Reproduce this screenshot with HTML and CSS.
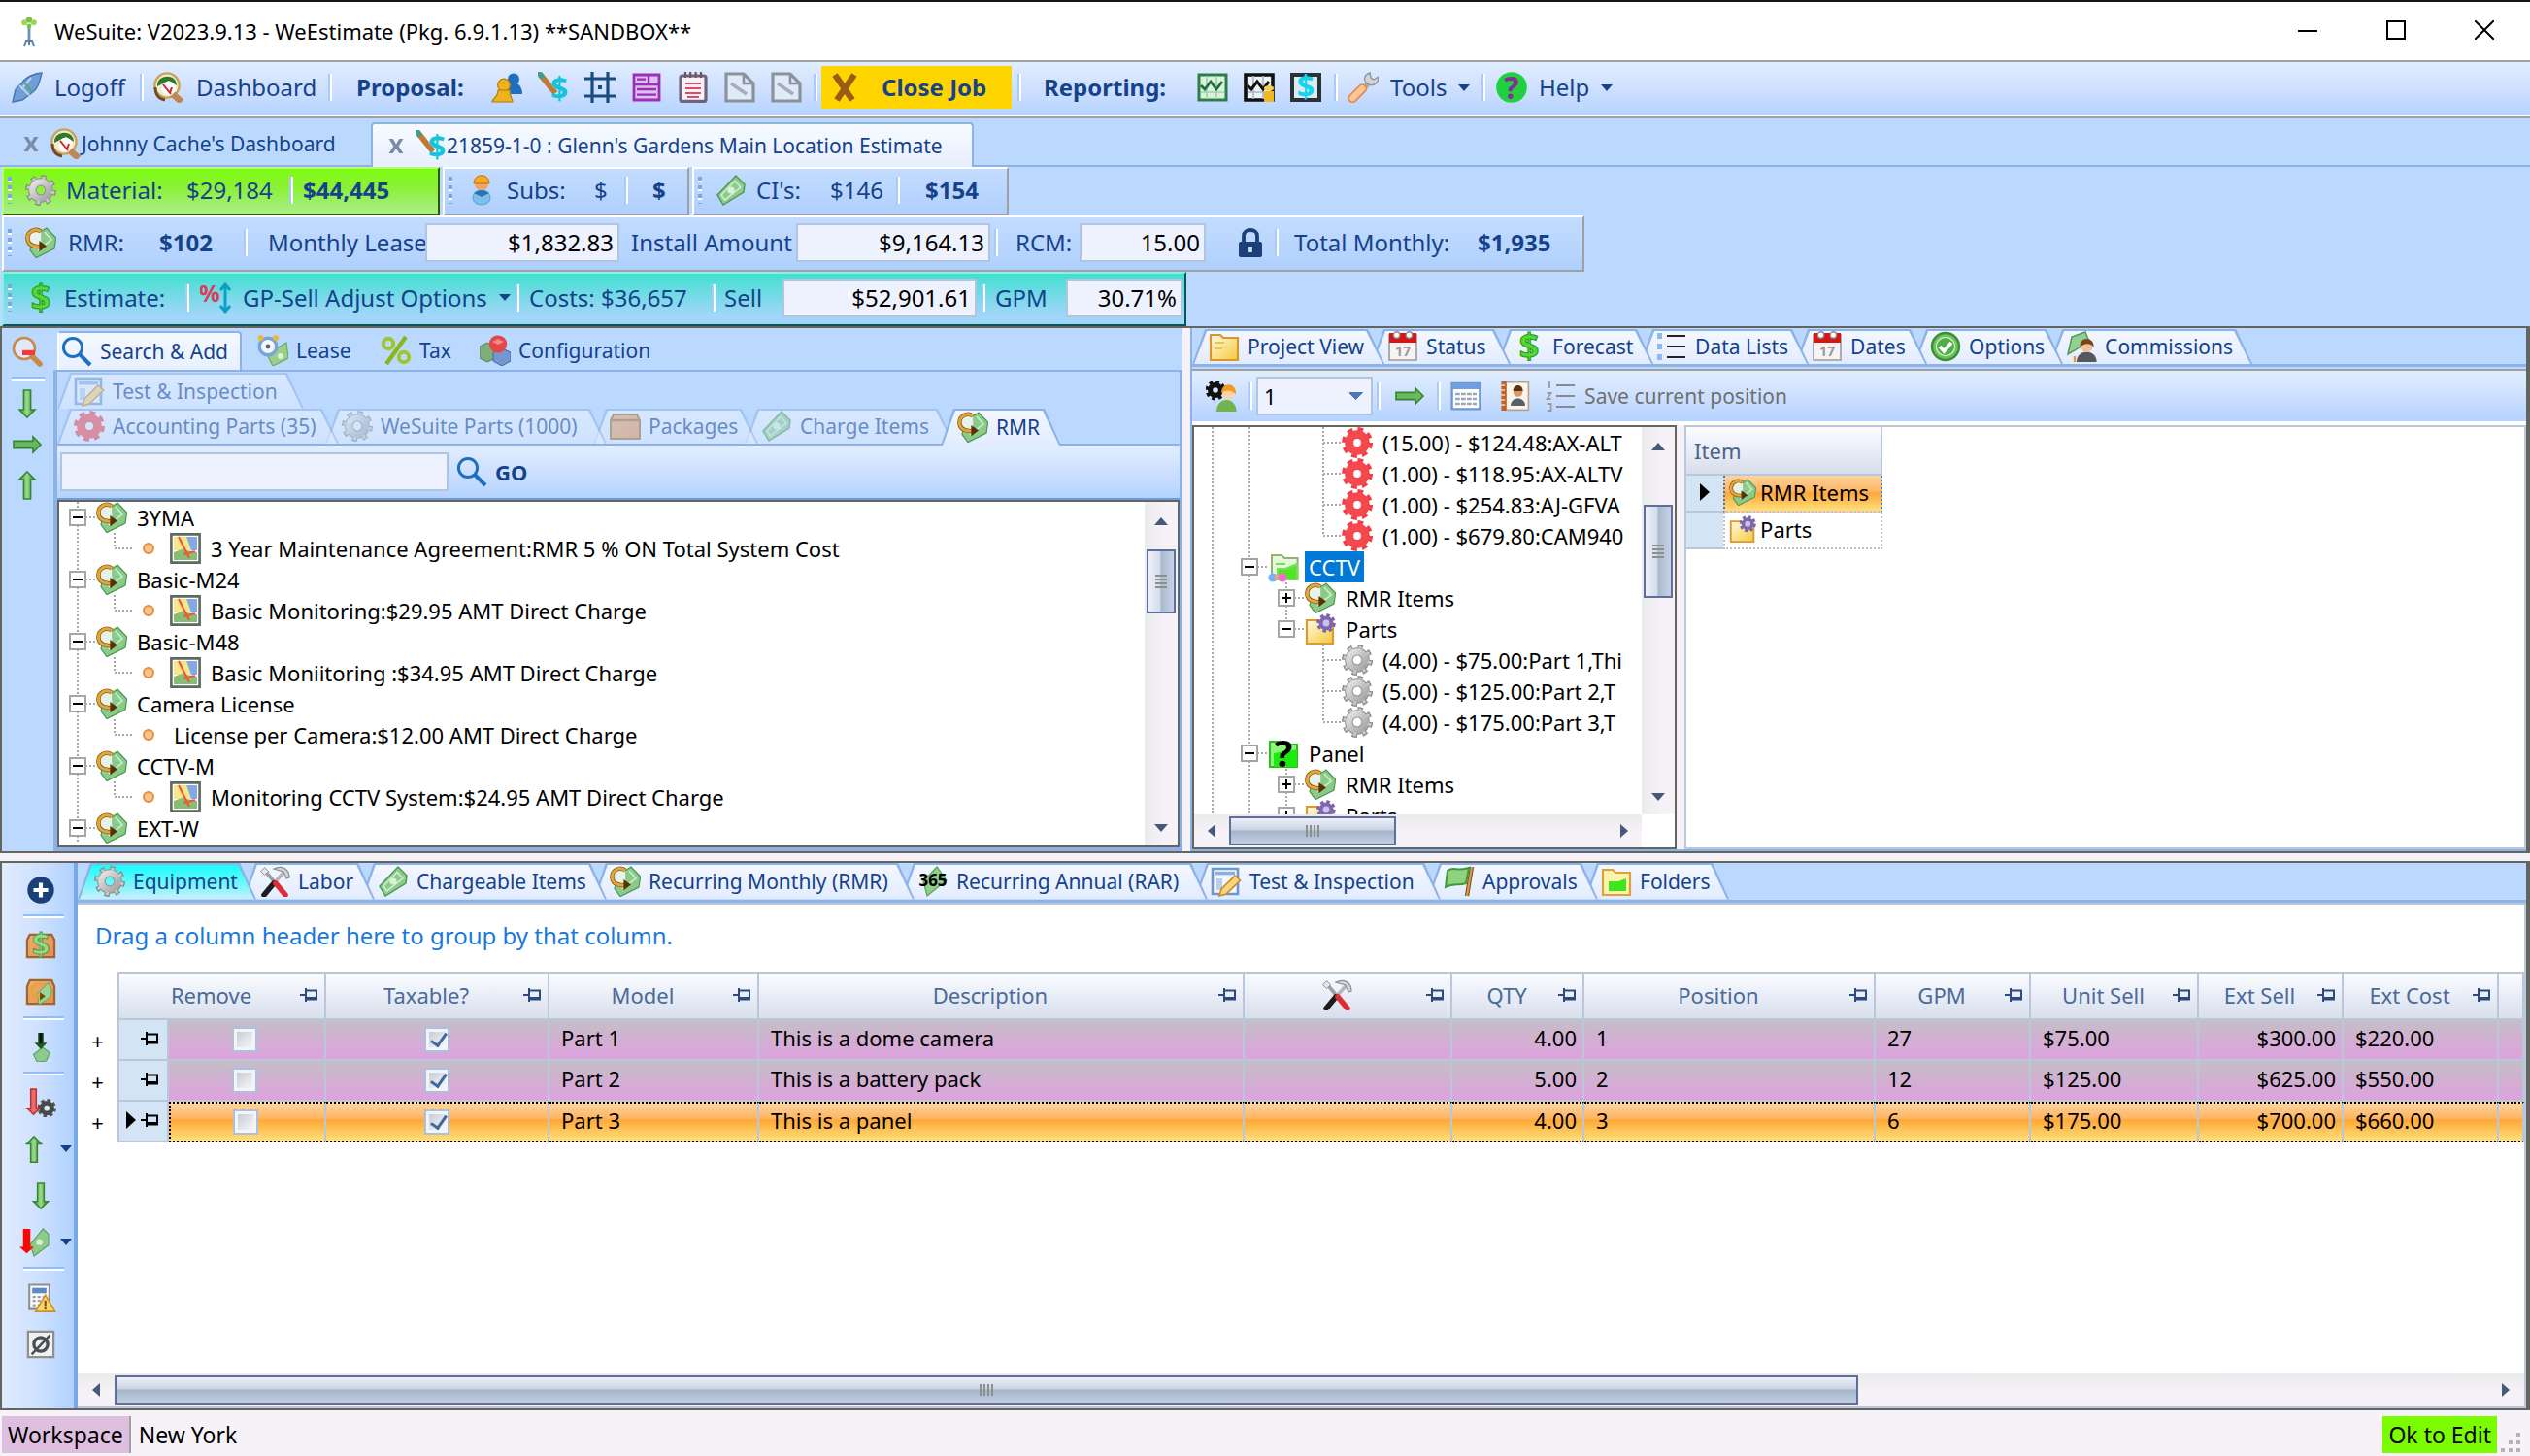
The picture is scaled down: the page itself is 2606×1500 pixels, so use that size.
FILE: index.html
```
<!DOCTYPE html>
<html lang="en">
<head>
<meta charset="utf-8">
<title>WeSuite: V2023.9.13 - WeEstimate</title>
<link rel="stylesheet" href="styles.css">
</head>
<body>

<svg class="paints" aria-hidden="true">
  <linearGradient id="gGreen" x1="0" x2="1"><stop offset="0" stop-color="#3f9a3a"/><stop offset=".5" stop-color="#9bdc8e"/><stop offset="1" stop-color="#2f7a2c"/></linearGradient>
  <linearGradient id="gGray" x1="0" y1="0" x2="1" y2="1"><stop offset="0" stop-color="#e6e6e6"/><stop offset="1" stop-color="#a2a2a2"/></linearGradient>
  <linearGradient id="gFolder" x1="0" y1="0" x2="1" y2="1"><stop offset="0" stop-color="#fffbe0"/><stop offset="1" stop-color="#f6c83a"/></linearGradient>
  <linearGradient id="gBox" x1="0" y1="0" x2="1" y2="1"><stop offset="0" stop-color="#e8b070"/><stop offset="1" stop-color="#f08a50"/></linearGradient>
</svg>

<!-- icon set -->
<svg class="defs" aria-hidden="true">
  <symbol id="logo" viewBox="0 0 16 16"><path d="M8 5v8" stroke="#6f8fae" stroke-width="1.4"/><path d="M5.5 15.5l1-2.5h3l1 2.5M8 13v2" fill="none" stroke="#5d80a6"/><circle cx="8" cy="2.2" r="1.6" fill="#7cc242"/><circle cx="5.6" cy="3.6" r="1.5" fill="#9bd45f"/><circle cx="10.4" cy="3.6" r="1.5" fill="#9bd45f"/><circle cx="8" cy="5.5" r="1.2" fill="#7cc242"/></symbol>
  <symbol id="logoff" viewBox="0 0 16 16"><path d="M15.500.5c-3 0-8 2-10 5L2 9 .5 15.500l5-1 6-4.500c3-3 3-6 4-9.500z" fill="#6f9fd8" stroke="#4673b4" stroke-width=".7"/><path d="M4 7l5 5M10 3L5 9" stroke="#b4d3f3"/><path d="M6.500 5.500l4 5" stroke="#5aa85a" stroke-width="1"/></symbol>
  <symbol id="dash" viewBox="0 0 16 16"><circle cx="7" cy="7" r="6.300" fill="#f3e9cc" stroke="#c8a45a" stroke-width="1.200"/><path d="M2 7.500C1.500 1 12 .5 12 7L8 4.500z" fill="#2e7a2c"/><circle cx="7.800" cy="8.500" r="3.600" fill="#fff"/><path d="M5 6.500l4 5M9.500 8l-1 3" stroke="#d3222c" stroke-width="1"/><path d="M10 11.500l4.500 4" stroke="#c08850" stroke-width="3.400"/><path d="M1 8c0 4 2 6 5 6.500" stroke="#6f4a24" stroke-width="1.400" fill="none"/></symbol>
  <symbol id="people" viewBox="0 0 16 16"><circle cx="11.500" cy="3.800" r="3" fill="#1f6fc0"/><path d="M7 11.500c0-8 9-8 9 0z" fill="#1f6fc0"/><circle cx="6.500" cy="6.800" r="3.200" fill="#f0b21a" stroke="#b47a10" stroke-width=".6"/><path d="M.5 15.500c0-2 3-2 3-6h6c0 4 1.500 4 1.500 6z" fill="#f0b21a" stroke="#b47a10" stroke-width=".6"/></symbol>
  <symbol id="pencil" viewBox="0 0 16 16"><path d="M1 1l8 10" stroke="#c07a35" stroke-width="3"/><path d="M0 0l2.500 3" stroke="#3aa08c" stroke-width="2.600"/><text x="6.500" y="14.500" class="ic-t" font-size="16" fill="#14c4da">$</text></symbol>
  <symbol id="hash" viewBox="0 0 16 16"><path d="M4 0v16M12 0v16M0 3.500h16M0 12.500h16" stroke="#1b4b7c" stroke-width="1.600"/><path d="M7 7h2v2H7z" fill="#1b4b7c"/></symbol>
  <symbol id="form" viewBox="0 0 16 16"><path d="M1.500 1.500h13v13h-13z" fill="#dcc0ee" stroke="#9b2fb8" stroke-width="1.400"/><path d="M9 1.500v5M1.500 6.500h13M3 3.800h4.500M3 9h10M3 11.800h10" stroke="#9b2fb8" stroke-width="1.200"/></symbol>
  <symbol id="notepad" viewBox="0 0 16 16"><rect x="1.500" y="2" width="13" height="13.200" rx="1" fill="#f6f2f6" stroke="#6f6480" stroke-width="1.600"/><path d="M4 0v3M6.600 0v3M9.300 0v3M12 0v3" stroke="#6f5060" stroke-width="1.100"/><path d="M4 6h8M4 8.500h8M4 11h8M5 13h6" stroke="#dd4a6a" stroke-width="1"/></symbol>
  <symbol id="docedit" viewBox="0 0 16 16"><path d="M1 1h9l5 5v9H1z" fill="#dfeafa" stroke="#8d9299" stroke-width="1.600"/><path d="M10 1v5h5" fill="none" stroke="#8d9299" stroke-width="1.300"/><path d="M3.500 6l8 5.500" stroke="#a7aeb8" stroke-width="1.800"/></symbol>
  <symbol id="bigx" viewBox="0 0 16 16"><path d="M3 1.500l9 13M13 1.500l-9 13" stroke="#9a5c14" stroke-width="3.200"/></symbol>
  <symbol id="chartg" viewBox="0 0 16 16"><path d="M1 1.500h14v13H1z" fill="#d9f2dc" stroke="#2f7d46" stroke-width="1.500"/><path d="M5 2v12M10 2v12M2 10.500h12" stroke="#9fcfae" stroke-width=".8"/><path d="M2 7l2 2 3-4 3 4 3-4" fill="none" stroke="#1f6d3a" stroke-width="1.400"/></symbol>
  <symbol id="chartb" viewBox="0 0 16 16"><path d="M1 1.500h14v13H1z" fill="#eef2f8" stroke="#111" stroke-width="1.800"/><path d="M5 2v12M10 2v12M2 10.500h12" stroke="#a8b4c8" stroke-width=".8"/><path d="M2 7l2 2 3-4 3 4 3-4" fill="none" stroke="#111" stroke-width="1.500"/><ellipse cx="13" cy="8.500" rx="2.500" ry="1.400" fill="#f7d04a"/><path d="M10.500 10h5v5.500h-5z" fill="#efb825"/></symbol>
  <symbol id="chartd" viewBox="0 0 16 16"><path d="M1 1.500h14v13H1z" fill="#dfe9f2" stroke="#2a3238" stroke-width="2"/><text x="8" y="13.600" text-anchor="middle" class="ic-t" font-size="16" fill="#12d5ee">$</text></symbol>
  <symbol id="wrench" viewBox="0 0 16 16"><path d="M8.500 8.500l3-3.500" stroke="#a9acb4" stroke-width="2.800"/><path d="M11.500.5c-3 1-3.500 4-1.500 5.500s6 1 6-3.500l-2.500 1.500-1.500-1z" fill="#d2d4d8" stroke="#8f929a" stroke-width=".7"/><path d="M2.600 13.600l5-5" stroke="#e58a50" stroke-width="5" stroke-linecap="round"/><path d="M2.600 13.600l5-5" stroke="#fbc59a" stroke-width="3.200" stroke-linecap="round"/></symbol>
  <symbol id="help" viewBox="0 0 16 16"><circle cx="8" cy="8" r="7.900" fill="#1fd03f"/><text x="8" y="13.800" text-anchor="middle" class="ic-t" font-size="16" fill="#8a2a9c">?</text></symbol>
  <symbol id="gear" viewBox="0 0 16 16"><circle cx="8" cy="8" r="6.800" fill="none" stroke="#8b8b8b" stroke-width="2.400" stroke-dasharray="2.600 2.741"/><circle cx="8" cy="8" r="4.300" fill="none" stroke="#8f8f8f" stroke-width="4.200"/><circle cx="8" cy="8" r="4.300" fill="none" stroke="url(#gGray)" stroke-width="3.200"/><circle cx="8" cy="8" r="6.400" fill="none" stroke="#c8c8c8" stroke-width="1.800" stroke-dasharray="1.500 3.527" stroke-dashoffset="-.5"/></symbol>
  <symbol id="gearred" viewBox="0 0 16 16"><circle cx="8" cy="8" r="6.700" fill="none" stroke="#ee4046" stroke-width="2.600" stroke-dasharray="2.800 2.462"/><circle cx="8" cy="8" r="4.200" fill="none" stroke="#f2484e" stroke-width="4.400"/></symbol>
  <symbol id="sub" viewBox="0 0 16 16"><circle cx="8" cy="4.800" r="3.500" fill="#e9a668"/><path d="M4 4.500c0-5.500 8-5.500 8 0z" fill="#f7a823" stroke="#c06f14" stroke-width=".5"/><path d="M3.500 12c0-5 9-5 9 0 0 4.500-9 4.500-9 0z" fill="#7cc0ee" stroke="#5a9fd4" stroke-width=".5"/><path d="M4 9.500c2-2 6-2 8 0l-4 2z" fill="#2f72b8"/></symbol>
  <symbol id="money" viewBox="0 0 16 16"><path d="M1 10.500L10.500.5 15 5l-.5 4L4 15.500z" fill="#8ccb8c" stroke="#4f9650" stroke-width=".7"/><path d="M3 10.500L10 3.200 13 6.500 4.800 13z" fill="none" stroke="#cdeccb" stroke-width=".8"/><circle cx="8" cy="8" r="1.800" fill="#d9f2d6"/></symbol>
  <symbol id="rmr" viewBox="0 0 16 16"><path d="M4 5L11 .5l4.800 5L15 11l-9.500 4.800-3-4z" fill="#8acb8a" stroke="#4f9650" stroke-width=".6"/><path d="M10 2.500l3.500 4-7 5.500" fill="none" stroke="#c8eac6" stroke-width=".9"/><path d="M8 2.300C5 0 1 2.500 1.200 6c.2 3.500 4 4.300 7 4" fill="#e8f2ea" stroke="#8a5a12" stroke-width="2.200"/><path d="M8 2.300C5 0 1 2.500 1.200 6c.2 3.500 4 4.300 7 4" fill="none" stroke="#e2a63a" stroke-width="1.400"/><path d="M7.200 7l3.800 2.800L7.200 12.600z" fill="#5a3208"/></symbol>
  <symbol id="lock" viewBox="0 0 16 16"><path d="M4.500 8V4.500c0-4 7-4 7 0V8" fill="none" stroke="#1b3f78" stroke-width="1.900"/><rect x="2" y="7.500" width="12" height="8" rx="1" fill="#1b3f78"/><path d="M8 10v3" stroke="#cfe0fa" stroke-width="1.800"/></symbol>
  <symbol id="dollar" viewBox="0 0 16 16"><text x="8" y="14.200" text-anchor="middle" class="ic-t" font-size="18" fill="#55d83a" stroke="#2a9f1d" stroke-width=".6">$</text></symbol>
  <symbol id="gp" viewBox="0 0 16 16"><text x="-.5" y="10" class="ic-t" font-size="12" fill="#dd3b5a">%</text><path d="M13 1.500v13M10.500 4L13 1l2.500 3M10.500 12l2.500 3 2.500-3" fill="none" stroke="#0f9fc4" stroke-width="1.500"/></symbol>
  <symbol id="mag" viewBox="0 0 16 16"><circle cx="6" cy="6" r="4.800" fill="none" stroke="#1d6fc0" stroke-width="1.500"/><path d="M9.500 9.500L15 15" stroke="#1d6fc0" stroke-width="2"/></symbol>
  <symbol id="magminus" viewBox="0 0 16 16"><circle cx="6.500" cy="6.500" r="5.500" fill="#dfe9f8" stroke="#c98a4a" stroke-width="1.300"/><path d="M10.500 10.500l4 4" stroke="#c88a48" stroke-width="2.800" stroke-linecap="round"/><path d="M5.500 8.700h6.500" stroke="#f43a3a" stroke-width="2.600"/></symbol>
  <symbol id="up" viewBox="0 0 16 16"><path d="M8 1l4 4H9.800v10H6.200V5H4z" fill="url(#gGreen)" stroke="#37862f" stroke-width=".8"/></symbol>
  <symbol id="down" viewBox="0 0 16 16"><path d="M8 15l4-4H9.800V1H6.200v10H4z" fill="url(#gGreen)" stroke="#37862f" stroke-width=".8"/></symbol>
  <symbol id="right" viewBox="0 0 16 16"><path d="M15 8l-4-4v2.200H1v3.600h10V12z" fill="#6bb862" stroke="#37862f" stroke-width=".8"/></symbol>
  <symbol id="clock" viewBox="0 0 16 16"><path d="M5 10l10-6 1 8-8 4z" fill="#9ad08c" stroke="#6aab5c" stroke-width=".6"/><circle cx="5.500" cy="6" r="4.400" fill="#f3f8fd" stroke="#78a4dc" stroke-width="1.700"/><circle cx="5.500" cy="6" r="1.200" fill="#667"/><circle cx="1.800" cy="1.500" r="1.500" fill="#edb93a"/><circle cx="9.500" cy="1.500" r="1.500" fill="#edb93a"/><circle cx="12" cy="11" r="1.500" fill="#dcf3d0"/></symbol>
  <symbol id="percent" viewBox="0 0 16 16"><path d="M13 1L3 15" stroke="#8bb51c" stroke-width="2.200"/><circle cx="4" cy="4.500" r="2.600" fill="none" stroke="#9cc62b" stroke-width="2"/><circle cx="12" cy="11.500" r="2.600" fill="none" stroke="#9cc62b" stroke-width="2"/></symbol>
  <symbol id="blocks" viewBox="0 0 16 16"><path d="M0 6l4-2 4 2v6l-4 2-4-2z" fill="#7fae7b" stroke="#4d8450" stroke-width=".5"/><path d="M7 9l4.500-2L16 9v4.500L11.500 16 7 13.500z" fill="#7497cf" stroke="#44669c" stroke-width=".5"/><circle cx="9.500" cy="4.800" r="4.600" fill="#e24848"/><path d="M6.500 3.500l3-1.500 3 1.500-3 1.500z" fill="#f58a8a"/></symbol>
  <symbol id="note" viewBox="0 0 16 16"><path d="M1 1.500h13v13H1z" fill="#f4f8fd" stroke="#6d97cf" stroke-width="1.300"/><path d="M2.500 3.800h10" stroke="#89b0e0" stroke-width="1.800"/><path d="M3 6.500h3v6H3z" fill="#b5d0f0"/><path d="M4.500 15.500l1-3.500 7-7 2.800 2.500-7.300 7z" fill="#fbd57a" stroke="#c58a34" stroke-width=".8"/></symbol>
  <symbol id="box" viewBox="0 0 16 16"><path d="M2 2h12l1.500 3v9.500H.5V5z" fill="url(#gBox)" stroke="#a0662a" stroke-width="1"/><path d="M.5 5h15" stroke="#a0662a" stroke-width="1.200"/></symbol>
  <symbol id="map" viewBox="0 0 16 16"><path d="M.7.7h14.600v14.600H.7z" fill="#fff" stroke="#5d6a5f" stroke-width="1.300"/><path d="M2 2h6.500l2.500 7H2z" fill="#f6e88a"/><path d="M8.500 2H14v7h-3z" fill="#82a8e6"/><path d="M2 10l4-1.500 8 1.500v4H2z" fill="#86bf72"/><path d="M4.500 2l5.500 11M7 11l6-1.500" stroke="#f0563c" stroke-width="1.100"/></symbol>
  <symbol id="folder" viewBox="0 0 16 16"><path d="M1 2h5l1.500 1.500H15v11.500H1z" fill="url(#gFolder)" stroke="#d9972e" stroke-width="1.100"/><path d="M3 6h5M3 9h4" stroke="#e8c264" stroke-width=".9"/></symbol>
  <symbol id="calendar" viewBox="0 0 16 16"><path d="M1 2h14v13H1z" fill="#f5f3f3" stroke="#9b9a9a" stroke-width=".8"/><path d="M1 1h14v5H1z" fill="#d81414"/><circle cx="4.800" cy="2" r="1.600" fill="#fff" stroke="#8c8c8c" stroke-width=".7"/><circle cx="11.200" cy="2" r="1.600" fill="#fff" stroke="#8c8c8c" stroke-width=".7"/><text x="8" y="13" text-anchor="middle" class="ic-t" font-size="7" fill="#9a9a9a">17</text></symbol>
  <symbol id="list" viewBox="0 0 16 16"><path d="M5.500 2.500H15M5.500 8H15M5.500 13.500H15" stroke="#222" stroke-width="1.100"/><path d="M.5 1h2.500v3H.5zM.5 6.500h2.500v3H.5zM.5 12h2.500v3H.5z" fill="#8db8f0"/></symbol>
  <symbol id="numlist" viewBox="0 0 16 16"><path d="M5.500 2.500H15M5.500 8H15M5.500 13.500H15" stroke="#8a8a8a" stroke-width="1.100"/><path d="M2 .5v3.500M.8 6.500h2l-2 3h2M.8 12h2v3.500h-2" fill="none" stroke="#9a9a9a" stroke-width=".9"/></symbol>
  <symbol id="check" viewBox="0 0 16 16"><circle cx="8" cy="8" r="7" fill="#6cc458" stroke="#3a8f38" stroke-width="1.200"/><circle cx="8" cy="8" r="4.800" fill="#4fae47" stroke="#d8f0d2" stroke-width=".6"/><path d="M5 8l2.200 2.400L11 6" fill="none" stroke="#fff" stroke-width="1.900"/></symbol>
  <symbol id="commission" viewBox="0 0 16 16"><path d="M1 12L3 3l7-2.500 2 5z" fill="#92cf93" stroke="#4f9650" stroke-width=".7"/><path d="M5.500 16c0-7 10.300-7 10.300 0z" fill="#55585c"/><circle cx="10.800" cy="8" r="3" fill="#efc39a"/><path d="M7.300 8.500c-.8-6 7.500-6 7 0-1-2.500-5.500-2.500-7 0z" fill="#7a431b"/><path d="M4.500 13v3" stroke="#e8973a" stroke-width="1.200"/></symbol>
  <symbol id="gearuser" viewBox="0 0 16 16"><circle cx="5" cy="5" r="4.200" fill="none" stroke="#111" stroke-width="2" stroke-dasharray="1.800 1.499"/><circle cx="5" cy="5" r="2.700" fill="none" stroke="#111" stroke-width="2.600"/><path d="M5.500 16c0-8 10.300-8 10.300 0z" fill="#6fb54f"/><circle cx="11.500" cy="6.800" r="3" fill="#fbd4a4"/><path d="M8 6.500c0-6 8-6 7.500 1-1.500-2.500-5-3-7.500-1z" fill="#f19c1c"/></symbol>
  <symbol id="table" viewBox="0 0 16 16"><path d="M.8 1.500h14.400v13.200H.8z" fill="#fff" stroke="#6f97d2" stroke-width="1.200"/><path d="M1 1.500h14v3H1z" fill="#6f9fe0"/><path d="M2.500 7h11M2.500 9.500h11M2.500 12h11" stroke="#9aa7b8" stroke-width="1.200" stroke-dasharray="2.400 .6"/></symbol>
  <symbol id="contact" viewBox="0 0 16 16"><path d="M3.500.8h11.700v14.400H3.500z" fill="#fbf4ec" stroke="#b4a390" stroke-width=".8"/><path d="M1.200.5h2.600v15H1.200z" fill="#c0622c"/><path d="M.5 2.500h2.500M.5 5h2.500M.5 7.500h2.500M.5 10h2.500M.5 12.500h2.500" stroke="#f2d2b8" stroke-width=".8"/><path d="M6 13c0-5 7.500-5 7.500 0z" fill="#55606a"/><circle cx="9.800" cy="6" r="2.400" fill="#d89a68"/><path d="M7.300 5.500c0-4 5-4 5 0z" fill="#5b3314"/></symbol>
  <symbol id="cctv" viewBox="0 0 16 16"><path d="M2 2h5l1.500 1.500H15.300v11H2z" fill="#e2fad6" stroke="#93b07a" stroke-width="1"/><path d="M4 6.500h5M5 14.500V9h4l6-2.500v8z" stroke="#7fd860" fill="#50e625"/><circle cx="2.500" cy="13.500" r="2.300" fill="#6fb7ff"/><circle cx="7.500" cy="13.500" r="2.300" fill="#f46ad0"/><path d="M4 11.500l2 1-3 3z" fill="#ff9a70"/></symbol>
  <symbol id="parts" viewBox="0 0 16 16"><path d="M1 3.500h6L8 5h6.500v10.500H1z" fill="url(#gFolder)" stroke="#dd9a34" stroke-width="1.100"/><circle cx="11" cy="5" r="3.900" fill="none" stroke="#7a63ae" stroke-width="2" stroke-dasharray="1.700 1.363"/><circle cx="11" cy="5" r="2.700" fill="#cfc0e8" stroke="#7d66b2" stroke-width="2"/></symbol>
  <symbol id="panel" viewBox="0 0 16 16"><path d="M1 2h5l1.500 1.500H15v11.500H1z" fill="#8df57c" stroke="#2bbf1a"/><path d="M3 15V8l12-2v9z" fill="#1eea10"/><text x="8" y="15" text-anchor="middle" class="ic-t" font-size="19">?</text></symbol>
  <symbol id="tools" viewBox="0 0 16 16"><path d="M2.500 2L8 8.500" stroke="#9a9da3" stroke-width="1.800"/><path d="M.8 2.800l2-2 2 2-2 2z" fill="#e4e6ea" stroke="#8c8f96" stroke-width=".5"/><path d="M12.500 3.500L8 8.500" stroke="#b4b6bb" stroke-width="1.800"/><path d="M7.500 1.500c4-2 8 0 8 4.500l-1.500.5-1.500-3.500z" fill="#d4d6da" stroke="#8c8f96" stroke-width=".6"/><path d="M7.500 9l-5 6" stroke="#1d1d1d" stroke-width="2.800" stroke-linecap="round"/><path d="M8.500 9l5 6" stroke="#dd2c33" stroke-width="2.800" stroke-linecap="round"/></symbol>
  <symbol id="m365" viewBox="0 0 16 16"><path d="M3 8L10 .5l5 7L5 15.500z" fill="#8fce8c" stroke="#5aa35a" stroke-width=".6"/><text x="8" y="10.500" text-anchor="middle" class="ic-t" font-size="8.500">365</text></symbol>
  <symbol id="flag" viewBox="0 0 16 16"><path d="M14.500.5L12 15.500" stroke="#8a5420" stroke-width="2.200"/><path d="M14.500.5L12 15.500" stroke="#d59a54" stroke-width="1"/><path d="M2 2.500c3-2.500 5 .5 11-1.500l-1.500 8c-4 1.500-6-.5-10.500 2z" fill="#8ed27e" stroke="#3e9a3c" stroke-width="1"/></symbol>
  <symbol id="folderg" viewBox="0 0 16 16"><path d="M1 2h5l1.500 1.500H15v11.500H1z" fill="#fdf3b0" stroke="#e0a235" stroke-width="1.100"/><path d="M4 8h5l4-1.500V13H4z" fill="#3fe61c"/></symbol>
  <symbol id="plus" viewBox="0 0 16 16"><circle cx="8" cy="8" r="7.300" fill="#1b3f78"/><path d="M8 4v8M4 8h8" stroke="#fff" stroke-width="2.200"/></symbol>
  <symbol id="boxd" viewBox="0 0 16 16"><path d="M2 2h12l1.500 3v9.500H.5V5z" fill="url(#gBox)" stroke="#a0662a" stroke-width="1.200"/><text x="8" y="14" text-anchor="middle" class="ic-t" font-size="17" fill="#93dd86" stroke="#4d9a48" stroke-width=".5">$</text></symbol>
  <symbol id="boxr" viewBox="0 0 16 16"><path d="M2 1.500h12L15.500 5v9.500H.5V5z" fill="url(#gBox)" stroke="#a0662a" stroke-width="1.200"/><path d="M6 9l6-6 2 4-1 4-6 4z" fill="#9bd392" stroke="#5aa35a" stroke-width=".5"/><path d="M9 4.500c-3-2-6 0-6 2.500s2.500 3.500 5 3.200" fill="none" stroke="#e2a63a" stroke-width="1.700"/><path d="M7.500 8l3 2.300-3 2.400z" fill="#7a4808"/></symbol>
  <symbol id="downmoney" viewBox="0 0 16 16"><path d="M4 12l5-4 4 3-2 4.500-5 .5z" fill="#8ccb8c" stroke="#5aa35a" stroke-width=".6"/><path d="M8 9L4.500 5.500h2V0h3v5.500h2z" fill="#1d5b1c"/><path d="M7.200 0h1.600v6H7.200z" fill="#0b130b"/></symbol>
  <symbol id="downgear" viewBox="0 0 16 16"><circle cx="11.300" cy="11" r="4.200" fill="none" stroke="#555" stroke-width="2" stroke-dasharray="1.800 1.500"/><circle cx="11.300" cy="11" r="2.800" fill="#dce9fb" stroke="#4a4a4a" stroke-width="2.600"/><path d="M4 14.500l3.500-3.500H5.500V.5h-3V11H.5z" fill="#ee6a6a" stroke="#b53434" stroke-width=".8"/></symbol>
  <symbol id="redmoney" viewBox="0 0 16 16"><path d="M6 9l7-8.500 3 3v6L8 15.500z" fill="#8ccb8c" stroke="#5aa35a" stroke-width=".6"/><circle cx="11" cy="7.800" r="1.700" fill="#d9f2d6"/><path d="M4 14l4-3.600H6V.5H2v9.900H0z" fill="#fb0505"/></symbol>
  <symbol id="calc" viewBox="0 0 16 16"><path d="M1.700.8h11v13.400h-11z" fill="#fbfbfb" stroke="#8f8f8f" stroke-width="1.100"/><path d="M3.300 2.500h7.800v3H3.300z" fill="#5d88c8"/><path d="M3.500 7.500h8M3.500 9.700h8M3.500 12h8" stroke="#a0a0a0" stroke-width="1.200" stroke-dasharray="1.700 1"/><path d="M10.500 6.500l5.300 9H5.200z" fill="#fbd96a" stroke="#d0912c" stroke-width=".9"/><path d="M10.500 9.500v3M10.500 13.300v1.200" stroke="#7a4a10" stroke-width="1.100"/></symbol>
  <symbol id="null" viewBox="0 0 16 16"><path d="M1 1h14v14H1z" fill="#f1f1f1" stroke="#8f8f8f" stroke-width="1.200"/><circle cx="8" cy="8" r="3.800" fill="none" stroke="#4b4f52" stroke-width="1.800"/><path d="M3 13.500L13 3" stroke="#4b4f52" stroke-width="1.300"/></symbol>
  <symbol id="pin" viewBox="0 0 20 16"><path d="M1 8h6M7 1v14M8 3.500h10v9H8M8 11h10" fill="none" stroke="currentColor" stroke-width="2"/></symbol>
  <symbol id="tabx" viewBox="0 0 16 16"><path d="M1 1h4l3 5 3-5h4l-4.500 7L15 15h-4l-3-5-3 5H1l4.500-7z" fill="#7d8ba3"/></symbol>
</svg>

<header class="titlebar">
  <svg class="ic"><use href="#logo"/></svg>
  <h1>WeSuite: V2023.9.13 - WeEstimate (Pkg. 6.9.1.13) **SANDBOX**</h1>
  <div class="winbtns">
    <button aria-label="Minimize"><svg viewBox="0 0 20 20"><path d="M0 11h20" stroke="#000" stroke-width="2"/></svg></button>
    <button aria-label="Maximize"><svg viewBox="0 0 20 20"><path d="M1 1h18v18H1z" fill="none" stroke="#000" stroke-width="2"/></svg></button>
    <button aria-label="Close"><svg viewBox="0 0 20 20"><path d="M0 0l20 20M20 0L0 20" stroke="#000" stroke-width="2"/></svg></button>
  </div>
</header>

<nav class="bar mainbar">
  <button class="tool"><svg class="ic"><use href="#logoff"/></svg>Logoff</button>
  <i class="sep"></i>
  <button class="tool"><svg class="ic"><use href="#dash"/></svg>Dashboard</button>
  <i class="sep"></i>
  <b>Proposal:</b>
  <button class="tool" aria-label="Customer"><svg class="ic"><use href="#people"/></svg></button>
  <button class="tool" aria-label="Edit estimate"><svg class="ic"><use href="#pencil"/></svg></button>
  <button class="tool" aria-label="Numbers"><svg class="ic"><use href="#hash"/></svg></button>
  <button class="tool" aria-label="Form"><svg class="ic"><use href="#form"/></svg></button>
  <button class="tool" aria-label="Notes"><svg class="ic"><use href="#notepad"/></svg></button>
  <button class="tool" aria-label="Document"><svg class="ic"><use href="#docedit"/></svg></button>
  <button class="tool" aria-label="Document 2"><svg class="ic"><use href="#docedit"/></svg></button>
  <i class="sep"></i>
  <button class="tool closejob"><svg class="ic"><use href="#bigx"/></svg>Close Job</button>
  <i class="sep"></i>
  <b>Reporting:</b>
  <button class="tool" aria-label="Report"><svg class="ic"><use href="#chartg"/></svg></button>
  <button class="tool" aria-label="Cost report"><svg class="ic"><use href="#chartb"/></svg></button>
  <button class="tool" aria-label="Price report"><svg class="ic"><use href="#chartd"/></svg></button>
  <i class="sep"></i>
  <button class="tool drop"><svg class="ic"><use href="#wrench"/></svg>Tools</button>
  <i class="sep"></i>
  <button class="tool drop"><svg class="ic"><use href="#help"/></svg>Help</button>
</nav>

<nav class="doctabs">
  <a href="#" class="doctab"><svg class="x"><use href="#tabx"/></svg><svg class="ic"><use href="#dash"/></svg>Johnny Cache's Dashboard</a>
  <a href="#" class="doctab active"><svg class="x"><use href="#tabx"/></svg><svg class="ic"><use href="#pencil"/></svg>21859-1-0 : Glenn's Gardens Main Location Estimate</a>
</nav>

<section class="totals">
  <div class="totrow">
    <div class="strip material">
      <i class="grip"></i><svg class="ic"><use href="#gear"/></svg><span>Material:</span><span>$29,184</span><i class="sep"></i><b>$44,445</b>
    </div>
    <div class="strip subs">
      <i class="grip"></i><svg class="ic"><use href="#sub"/></svg><span>Subs:</span><span>$</span><i class="sep"></i><b>$</b>
    </div>
    <div class="strip cis">
      <i class="grip"></i><svg class="ic"><use href="#money"/></svg><span>CI's:</span><span>$146</span><i class="sep"></i><b>$154</b>
    </div>
  </div>
  <div class="strip rmrstrip">
    <i class="grip"></i><svg class="ic"><use href="#rmr"/></svg><span>RMR:</span><b>$102</b><i class="sep"></i>
    <label for="monthly-lease">Monthly Lease</label><input id="monthly-lease" class="money-in" value="$1,832.83">
    <label for="install-amount">Install Amount</label><input id="install-amount" class="money-in" value="$9,164.13">
    <i class="sep"></i>
    <label for="rcm">RCM:</label><input id="rcm" class="rcm-in" value="15.00">
    <svg class="ic"><use href="#lock"/></svg>
    <i class="sep"></i><span>Total Monthly:</span><b>$1,935</b>
  </div>
  <div class="strip estimate">
    <i class="grip"></i><svg class="ic"><use href="#dollar"/></svg><span>Estimate:</span><i class="sep"></i>
    <svg class="ic"><use href="#gp"/></svg>
    <button class="tool drop">GP-Sell Adjust Options</button>
    <i class="sep"></i><span>Costs: $36,657</span><i class="sep"></i>
    <label for="sell">Sell</label><input id="sell" class="money-in" value="$52,901.61">
    <i class="sep"></i>
    <label for="gpm">GPM</label><input id="gpm" class="gpm-in" value="30.71%">
  </div>
</section>

<main>
  <div class="upper">
    <section class="search">
      <div class="sidetools">
        <button aria-label="Clear search"><svg class="ic"><use href="#magminus"/></svg></button>
        <i class="hsep"></i>
        <button aria-label="Down"><svg class="ic"><use href="#down"/></svg></button>
        <button aria-label="Right"><svg class="ic"><use href="#right"/></svg></button>
        <button aria-label="Up"><svg class="ic"><use href="#up"/></svg></button>
      </div>
      <div class="searchmain">
        <nav class="flattabs">
          <a href="#" class="active"><svg class="ic"><use href="#mag"/></svg>Search &amp; Add</a>
          <a href="#"><svg class="ic"><use href="#clock"/></svg>Lease</a>
          <a href="#"><svg class="ic"><use href="#percent"/></svg>Tax</a>
          <a href="#"><svg class="ic"><use href="#blocks"/></svg>Configuration</a>
        </nav>
        <div class="searchpage">
          <nav class="traps parttabs dim">
            <a href="#" class="trap"><svg class="ic"><use href="#note"/></svg>Test &amp; Inspection</a>
          </nav>
          <nav class="traps parttabs2">
            <a href="#" class="trap dim"><svg class="ic"><use href="#gearred"/></svg>Accounting Parts (35)</a>
            <a href="#" class="trap dim"><svg class="ic"><use href="#gear"/></svg>WeSuite Parts (1000)</a>
            <a href="#" class="trap dim"><svg class="ic"><use href="#box"/></svg>Packages</a>
            <a href="#" class="trap dim"><svg class="ic"><use href="#money"/></svg>Charge Items</a>
            <a href="#" class="trap front"><svg class="ic"><use href="#rmr"/></svg>RMR</a>
          </nav>
          <form class="searchbar">
            <input type="text" aria-label="Search">
            <button type="button" class="tool"><svg class="ic"><use href="#mag"/></svg><b>GO</b></button>
          </form>
          <div class="treebox">
            <ul class="tree">
              <li><i class="g v h"><button class="exp" aria-label="Collapse"></button></i><svg class="ic"><use href="#rmr"/></svg><span>3YMA</span></li>
              <li><i class="g v"></i><i class="g l"></i><i class="dot"></i><svg class="ic"><use href="#map"/></svg><span>3 Year Maintenance Agreement:RMR 5 % ON Total System Cost</span></li>
              <li><i class="g v h"><button class="exp" aria-label="Collapse"></button></i><svg class="ic"><use href="#rmr"/></svg><span>Basic-M24</span></li>
              <li><i class="g v"></i><i class="g l"></i><i class="dot"></i><svg class="ic"><use href="#map"/></svg><span>Basic Monitoring:$29.95 AMT Direct Charge</span></li>
              <li><i class="g v h"><button class="exp" aria-label="Collapse"></button></i><svg class="ic"><use href="#rmr"/></svg><span>Basic-M48</span></li>
              <li><i class="g v"></i><i class="g l"></i><i class="dot"></i><svg class="ic"><use href="#map"/></svg><span>Basic Moniitoring :$34.95 AMT Direct Charge</span></li>
              <li><i class="g v h"><button class="exp" aria-label="Collapse"></button></i><svg class="ic"><use href="#rmr"/></svg><span>Camera License</span></li>
              <li><i class="g v"></i><i class="g l"></i><i class="dot"></i><span class="noicon">License per Camera:$12.00 AMT Direct Charge</span></li>
              <li><i class="g v h"><button class="exp" aria-label="Collapse"></button></i><svg class="ic"><use href="#rmr"/></svg><span>CCTV-M</span></li>
              <li><i class="g v"></i><i class="g l"></i><i class="dot"></i><svg class="ic"><use href="#map"/></svg><span>Monitoring CCTV System:$24.95 AMT Direct Charge</span></li>
              <li><i class="g v h"><button class="exp" aria-label="Collapse"></button></i><svg class="ic"><use href="#rmr"/></svg><span>EXT-W</span></li>
            </ul>
            <div class="vscroll"><i class="tri up"></i><i class="thumb short"></i><i class="tri dn"></i></div>
          </div>
        </div>
      </div>
    </section>

    <section class="project">
      <nav class="traps projtabs">
        <a href="#" class="trap"><svg class="ic"><use href="#folder"/></svg>Project View</a>
        <a href="#" class="trap"><svg class="ic"><use href="#calendar"/></svg>Status</a>
        <a href="#" class="trap"><svg class="ic"><use href="#dollar"/></svg>Forecast</a>
        <a href="#" class="trap"><svg class="ic"><use href="#list"/></svg>Data Lists</a>
        <a href="#" class="trap"><svg class="ic"><use href="#calendar"/></svg>Dates</a>
        <a href="#" class="trap"><svg class="ic"><use href="#check"/></svg>Options</a>
        <a href="#" class="trap"><svg class="ic"><use href="#commission"/></svg>Commissions</a>
      </nav>
      <div class="bar projbar">
        <button class="tool" aria-label="Settings"><svg class="ic"><use href="#gearuser"/></svg></button>
        <i class="sep"></i>
        <select aria-label="Position"><option>1</option></select>
        <i class="sep"></i>
        <button class="tool" aria-label="Go"><svg class="ic"><use href="#right"/></svg></button>
        <i class="sep"></i>
        <button class="tool" aria-label="Table"><svg class="ic"><use href="#table"/></svg></button>
        <button class="tool" aria-label="Contacts"><svg class="ic"><use href="#contact"/></svg></button>
        <button class="tool muted"><svg class="ic"><use href="#numlist"/></svg>Save current position</button>
      </div>
      <div class="projbody">
        <div class="projtree">
          <div class="treeview">
            <ul class="tree">
              <li><i class="g v"></i><i class="g v"></i><i class="g"></i><i class="g v h"></i><svg class="ic"><use href="#gearred"/></svg><span>(15.00) - $124.48:AX-ALT</span></li>
              <li><i class="g v"></i><i class="g v"></i><i class="g"></i><i class="g v h"></i><svg class="ic"><use href="#gearred"/></svg><span>(1.00) - $118.95:AX-ALTV</span></li>
              <li><i class="g v"></i><i class="g v"></i><i class="g"></i><i class="g v h"></i><svg class="ic"><use href="#gearred"/></svg><span>(1.00) - $254.83:AJ-GFVA</span></li>
              <li><i class="g v"></i><i class="g v"></i><i class="g"></i><i class="g l"></i><svg class="ic"><use href="#gearred"/></svg><span>(1.00) - $679.80:CAM940</span></li>
              <li><i class="g v"></i><i class="g v h"><button class="exp" aria-label="Collapse"></button></i><svg class="ic"><use href="#cctv"/></svg><span class="sel">CCTV</span></li>
              <li><i class="g v"></i><i class="g v"></i><i class="g v h"><button class="exp plus" aria-label="Expand"></button></i><svg class="ic"><use href="#rmr"/></svg><span>RMR Items</span></li>
              <li><i class="g v"></i><i class="g v"></i><i class="g l"><button class="exp" aria-label="Collapse"></button></i><svg class="ic"><use href="#parts"/></svg><span>Parts</span></li>
              <li><i class="g v"></i><i class="g v"></i><i class="g"></i><i class="g v h"></i><svg class="ic"><use href="#gear"/></svg><span>(4.00) - $75.00:Part 1,Thi</span></li>
              <li><i class="g v"></i><i class="g v"></i><i class="g"></i><i class="g v h"></i><svg class="ic"><use href="#gear"/></svg><span>(5.00) - $125.00:Part 2,T</span></li>
              <li><i class="g v"></i><i class="g v"></i><i class="g"></i><i class="g l"></i><svg class="ic"><use href="#gear"/></svg><span>(4.00) - $175.00:Part 3,T</span></li>
              <li><i class="g v"></i><i class="g v h"><button class="exp" aria-label="Collapse"></button></i><svg class="ic"><use href="#panel"/></svg><span>Panel</span></li>
              <li><i class="g v"></i><i class="g v"></i><i class="g v h"><button class="exp plus" aria-label="Expand"></button></i><svg class="ic"><use href="#rmr"/></svg><span>RMR Items</span></li>
              <li><i class="g v"></i><i class="g v"></i><i class="g l"><button class="exp plus" aria-label="Expand"></button></i><svg class="ic"><use href="#parts"/></svg><span>Parts</span></li>
            </ul>
          </div>
          <div class="vscroll"><i class="tri up"></i><i class="thumb long"></i><i class="tri dn"></i></div>
          <div class="hscroll"><i class="tri lf"></i><i class="track"><i class="thumb"></i></i><i class="tri rt"></i></div>
        </div>
        <div class="itempane">
          <table class="items">
            <thead><tr><th colspan="2">Item</th></tr></thead>
            <tbody>
              <tr class="cur"><td class="rs"><i class="tri rt black"></i></td><td><div><svg class="ic"><use href="#rmr"/></svg>RMR Items</div></td></tr>
              <tr><td class="rs"></td><td><div><svg class="ic"><use href="#parts"/></svg>Parts</div></td></tr>
            </tbody>
          </table>
        </div>
      </div>
    </section>
  </div>

  <section class="lower">
    <div class="sidetools2">
      <button aria-label="Add"><svg class="ic"><use href="#plus"/></svg></button>
      <i class="hsep"></i>
      <button aria-label="Package price"><svg class="ic"><use href="#boxd"/></svg></button>
      <button aria-label="Package RMR"><svg class="ic"><use href="#boxr"/></svg></button>
      <i class="hsep"></i>
      <button aria-label="Import charges"><svg class="ic"><use href="#downmoney"/></svg></button>
      <i class="hsep"></i>
      <button aria-label="Import parts"><svg class="ic"><use href="#downgear"/></svg></button>
      <button aria-label="Move up" class="drop"><svg class="ic"><use href="#up"/></svg></button>
      <button aria-label="Move down"><svg class="ic"><use href="#down"/></svg></button>
      <button aria-label="Reduce price" class="drop"><svg class="ic"><use href="#redmoney"/></svg></button>
      <i class="hsep"></i>
      <button aria-label="Calculation warnings"><svg class="ic"><use href="#calc"/></svg></button>
      <button aria-label="Null items"><svg class="ic"><use href="#null"/></svg></button>
    </div>
    <div class="gridpane">
      <nav class="traps gridtabs">
        <a href="#" class="trap cyan"><svg class="ic"><use href="#gear"/></svg>Equipment</a>
        <a href="#" class="trap"><svg class="ic"><use href="#tools"/></svg>Labor</a>
        <a href="#" class="trap"><svg class="ic"><use href="#money"/></svg>Chargeable Items</a>
        <a href="#" class="trap"><svg class="ic"><use href="#rmr"/></svg>Recurring Monthly (RMR)</a>
        <a href="#" class="trap"><svg class="ic"><use href="#m365"/></svg>Recurring Annual (RAR)</a>
        <a href="#" class="trap"><svg class="ic"><use href="#note"/></svg>Test &amp; Inspection</a>
        <a href="#" class="trap"><svg class="ic"><use href="#flag"/></svg>Approvals</a>
        <a href="#" class="trap"><svg class="ic"><use href="#folderg"/></svg>Folders</a>
      </nav>
      <div class="gridbody">
        <p class="grouphint">Drag a column header here to group by that column.</p>
        <table class="equip">
          <colgroup>
            <col class="c-plus"><col class="c-sel"><col class="c-remove"><col class="c-tax"><col class="c-model"><col class="c-desc"><col class="c-labor"><col class="c-qty"><col class="c-pos"><col class="c-gpm"><col class="c-unit"><col class="c-sell"><col class="c-cost"><col>
          </colgroup>
          <thead>
            <tr>
              <td class="plus"></td>
              <th colspan="2"><div><span>Remove</span><svg class="pin"><use href="#pin"/></svg></div></th>
              <th><div><span>Taxable?</span><svg class="pin"><use href="#pin"/></svg></div></th>
              <th><div><span>Model</span><svg class="pin"><use href="#pin"/></svg></div></th>
              <th><div><span>Description</span><svg class="pin"><use href="#pin"/></svg></div></th>
              <th><div><span><svg class="ic"><use href="#tools"/></svg></span><svg class="pin"><use href="#pin"/></svg></div></th>
              <th><div><span>QTY</span><svg class="pin"><use href="#pin"/></svg></div></th>
              <th><div><span>Position</span><svg class="pin"><use href="#pin"/></svg></div></th>
              <th><div><span>GPM</span><svg class="pin"><use href="#pin"/></svg></div></th>
              <th><div><span>Unit Sell</span><svg class="pin"><use href="#pin"/></svg></div></th>
              <th><div><span>Ext Sell</span><svg class="pin"><use href="#pin"/></svg></div></th>
              <th><div><span>Ext Cost</span><svg class="pin"><use href="#pin"/></svg></div></th>
              <th></th>
            </tr>
          </thead>
          <tbody>
            <tr>
              <td class="plus">+</td>
              <td class="rs"><div><svg class="pin"><use href="#pin"/></svg></div></td>
              <td class="c"><input type="checkbox" aria-label="Remove Part 1"></td>
              <td class="c"><input type="checkbox" aria-label="Part 1 taxable" checked></td>
              <td>Part 1</td><td>This is a dome camera</td><td></td><td class="r">4.00</td><td>1</td><td>27</td><td>$75.00</td><td class="r">$300.00</td><td>$220.00</td><td></td>
            </tr>
            <tr>
              <td class="plus">+</td>
              <td class="rs"><div><svg class="pin"><use href="#pin"/></svg></div></td>
              <td class="c"><input type="checkbox" aria-label="Remove Part 2"></td>
              <td class="c"><input type="checkbox" aria-label="Part 2 taxable" checked></td>
              <td>Part 2</td><td>This is a battery pack</td><td></td><td class="r">5.00</td><td>2</td><td>12</td><td>$125.00</td><td class="r">$625.00</td><td>$550.00</td><td></td>
            </tr>
            <tr class="cur">
              <td class="plus">+</td>
              <td class="rs"><div><i class="tri rt black"></i><svg class="pin"><use href="#pin"/></svg></div></td>
              <td class="c"><input type="checkbox" aria-label="Remove Part 3"></td>
              <td class="c"><input type="checkbox" aria-label="Part 3 taxable" checked></td>
              <td>Part 3</td><td>This is a panel</td><td></td><td class="r">4.00</td><td>3</td><td>6</td><td>$175.00</td><td class="r">$700.00</td><td>$660.00</td><td></td>
            </tr>
          </tbody>
        </table>
        <div class="hscroll wide"><i class="tri lf"></i><i class="track"><i class="thumb"></i></i><i class="tri rt"></i></div>
      </div>
    </div>
  </section>
</main>

<footer class="status">
  <span class="workspace">Workspace</span>
  <span>New York</span>
  <span class="ok">Ok to Edit</span>
  <svg class="sizer" viewBox="0 0 24 24"><path d="M16 2h4v4h-4zM16 10h4v4h-4zM16 18h4v4h-4zM8 10h4v4H8zM8 18h4v4H8zM0 18h4v4H0z" fill="#b5b3b8"/></svg>
</footer>

</body>
</html>
```
FILE: styles.css
```
:root {
  --ink: #15428b;
  --blue: #bbd9ff;
  --edge: #8db2e7;
  --line: #bac6da;
  --dark: #62665f;
  --bar: linear-gradient(#e1eeff, #c9ddff 60%, #b3d3ff);
}

* {
  box-sizing: border-box;
}

body {
  margin: 0;
  height: 100vh;
  display: flex;
  flex-direction: column;
  background: #f6f2f7;
  border-top: 2px solid #151515;
  color: var(--ink);
  font-family: "Noto Sans", "Open Sans", sans-serif;
  font-size: 24px;
  line-height: 32px;
}

.paints {
  position: absolute;
  width: 0;
  height: 0;
}

.defs {
  display: none;
}

.ic {
  width: 32px;
  height: 32px;
  flex: none;
  display: block;
}

.ic-t {
  font-family: "Noto Sans", sans-serif;
  font-weight: bold;
}

a {
  color: inherit;
  text-decoration: none;
}

button {
  border: 0;
  padding: 0;
  background: none;
  color: inherit;
  font: inherit;
}

input,
select {
  font: inherit;
  color: #000;
  border: 2px solid #b1c4e0;
  border-radius: 0;
  background: #eef2ff;
  outline: 0;
}

/* title bar */
.titlebar {
  display: flex;
  align-items: center;
  height: 62px;
  padding: 0 2px 0 14px;
  background: #fff;
  border-bottom: 2px solid #a0a0a0;
}

.titlebar h1 {
  margin: 0 0 0 10px;
  font-size: 22px;
  font-weight: normal;
  color: #000;
}

.winbtns {
  display: flex;
  margin-left: auto;
}

.winbtns button {
  width: 91px;
  height: 60px;
}

.winbtns svg {
  width: 20px;
  height: 20px;
}

/* toolbars */
.bar {
  display: grid;
  align-items: center;
  background: var(--bar);
}

.tool {
  display: flex;
  align-items: center;
  gap: 12px;
  white-space: nowrap;
}

.sep {
  width: 4px;
  height: 28px;
  border-left: 2px solid #a9cbfb;
  border-right: 2px solid #fff;
}

.drop::after {
  content: "";
  border: 6px solid transparent;
  border-top: 7px solid var(--ink);
  border-bottom: 0;
}

.mainbar {
  grid-template-columns: 132px 14px 180px 29px 139px repeat(6, 48px) 44px 8px 202px 27px 158px 48px 48px 45px 14px 138px 15px 1fr;
  height: 58px;
  padding: 0 0 4px 12px;
  border-bottom: 2px solid #a0a0a0;
  box-shadow: inset 0 -2px #fff;
}

.closejob {
  width: 196px;
  height: 44px;
  padding-left: 8px;
  gap: 22px;
  background: #ffd500;
  font-weight: bold;
}

/* document tabs */
.doctabs {
  display: grid;
  grid-template-columns: 380px 621px;
  height: 50px;
  padding: 4px 0 0 2px;
  background: var(--blue);
  border-bottom: 2px solid var(--edge);
  font-size: 21px;
}

.doctab {
  display: flex;
  align-items: center;
  padding-left: 20px;
  white-space: nowrap;
}

.doctab .x {
  width: 20px;
  height: 17px;
  margin-right: 10px;
}

.doctab.active {
  padding-left: 14px;
  border: 2px solid var(--edge);
  border-bottom: 0;
  border-radius: 4px 4px 0 0;
  background: linear-gradient(#f7fbff, #e6efff);
  margin-bottom: -2px;
}

/* totals strips */
.totals {
  background: var(--blue);
  padding-left: 2px;
}

.totrow {
  display: flex;
  gap: 3px;
}

.strip {
  display: grid;
  align-items: center;
  padding: 0 0 3px 4px;
  border: 2px solid #fff;
  border-right-color: #a0a0a0;
  border-bottom-color: #a0a0a0;
  background: linear-gradient(#c3dcff, #afd0fd);
  width: max-content;
  white-space: nowrap;
}

.strip input {
  height: 40px;
  padding: 0 4px;
  text-align: right;
}

.grip {
  width: 4px;
  height: 28px;
  background: repeating-linear-gradient(#7ba6e4 0 4px, #fff 4px 6px, transparent 6px 9px);
}

.totrow .strip {
  height: 50px;
}

.strip.material {
  grid-template-columns: 18px 42px 124px 106px 14px 139px;
  background: linear-gradient(#7cfc10, #8df03a 45%, #a9ef88);
  border-color: #b7ff70 #2d5a00 #2d5a00 #b7ff70;
}

.strip.subs {
  grid-template-columns: 18px 42px 90px 31px 29px 36px;
}

.strip.cis {
  grid-template-columns: 18px 42px 76px 68px 30px 84px;
}

.strip.rmrstrip {
  height: 58px;
  grid-template-columns: 18px 44px 94px 87px 25px 162px 212px 170px 204px 22px 66px 160px 41px 20px 189px 108px;
}

.strip.estimate {
  height: 56px;
  grid-template-columns: 18px 40px 125px 15px 44px 281px 14px 188px 13px 60px 205px 14px 73px 122px;
  background: linear-gradient(#40e0d0, #a0d6f8 80%);
  border-color: #8af0e4 #0d5552 #0d5552 #8af0e4;
}

.money-in {
  width: 200px;
}

.rcm-in {
  width: 130px;
}

.gpm-in {
  width: 120px;
}

/* main area */
main {
  flex: 1;
  display: flex;
  flex-direction: column;
  gap: 8px;
  min-height: 0;
}

.upper {
  flex: 542 1 0;
  min-height: 0;
  display: grid;
  grid-template-columns: 1218fr 1378fr;
  gap: 8px;
  border: 2px solid var(--dark);
  border-right-width: 4px;
}

.search {
  display: flex;
  min-height: 0;
  min-width: 0;
  background: var(--blue);
}

.sidetools {
  width: 53px;
  padding: 8px 0 0 10px;
  display: flex;
  flex-direction: column;
  gap: 8px;
}

.sidetools .ic {
  margin-bottom: 2px;
}

.hsep {
  width: 34px;
  height: 4px;
  border-top: 2px solid #8fbdfc;
  border-bottom: 2px solid #fff;
}

.searchmain {
  flex: 1;
  min-width: 0;
  display: flex;
  flex-direction: column;
}

.flattabs {
  display: grid;
  grid-template-columns: 200px 127px 102px 1fr;
  height: 43px;
  padding: 3px 0 0 4px;
  font-size: 21px;
}

.flattabs a {
  display: flex;
  align-items: center;
  gap: 8px;
  padding-left: 6px;
}

.flattabs a.active {
  width: 190px;
  padding-left: 2px;
  background: linear-gradient(#f4f8ff, #e8f0ff);
  border: 2px solid var(--edge);
  border-left-color: #fff;
  border-bottom: 0;
  border-radius: 4px 4px 0 0;
}

.searchpage {
  flex: 1;
  min-height: 0;
  display: flex;
  flex-direction: column;
  border: 3px solid var(--edge);
  border-top-width: 2px;
  border-left-width: 4px;
  border-bottom-width: 4px;
}

/* slanted tabs */
.traps {
  display: grid;
  font-size: 21px;
}

.trap {
  position: relative;
  z-index: 0;
  display: flex;
  align-items: center;
  gap: 8px;
  margin-right: -14px;
  padding-left: 17px;
  white-space: nowrap;
}

.trap::before,
.trap::after {
  content: "";
  position: absolute;
  z-index: -2;
  inset: 0;
  background: var(--edge);
  clip-path: polygon(13px 0, calc(100% - 17px) 0, 100% 100%, 0 100%);
}

.trap::after {
  z-index: -1;
  inset: 2px 2px 0;
  background: linear-gradient(#f3f7ff, #e2ecff);
}

.trap.cyan::after {
  background: linear-gradient(#17fdfd, #7cf6fb 60%, #cfeefd);
}

.trap:nth-child(1) { z-index: 8; }
.trap:nth-child(2) { z-index: 7; }
.trap:nth-child(3) { z-index: 6; }
.trap:nth-child(4) { z-index: 5; }
.trap:nth-child(5) { z-index: 4; }
.trap:nth-child(6) { z-index: 3; }
.trap:nth-child(7) { z-index: 2; }
.trap:nth-child(8) { z-index: 1; }
.trap.front:nth-child(n) { z-index: 9; }

.dim {
  opacity: .5;
}

.parttabs {
  grid-template-columns: 240px;
  height: 38px;
  padding-top: 1px;
}

.parttabs2 {
  grid-template-columns: 276px 276px 156px 202px 110px;
  height: 38px;
  border-bottom: 2px solid var(--edge);
}

.parttabs2 .trap.front {
  margin-bottom: -2px;
}

.searchbar {
  display: flex;
  align-items: center;
  gap: 8px;
  height: 56px;
  padding-left: 3px;
  background: var(--bar);
  border-bottom: 2px solid #6f9bd8;
}

.searchbar input {
  width: 400px;
  height: 40px;
}

.searchbar .tool {
  gap: 8px;
  font-size: 22px;
}

.treebox {
  flex: 1;
  min-height: 0;
  display: flex;
  background: #fff;
  border: 2px solid var(--dark);
}

.treebox .tree {
  flex: 1;
}

.tree {
  margin: 0;
  padding: 0;
  list-style: none;
  overflow: hidden;
  color: #000;
  font-size: 22px;
}

.tree li {
  display: flex;
  align-items: center;
  height: 32px;
  white-space: nowrap;
}

.tree span {
  padding: 0 10px;
}

.tree .noicon {
  padding-left: 4px;
}

.tree .sel {
  margin-left: 6px;
  padding: 0 4px;
  background: #0078d7;
  color: #fff;
}

.g {
  --dv: repeating-linear-gradient(#a8a8a8 0 2px, transparent 2px 4px);
  --dh: repeating-linear-gradient(90deg, #a8a8a8 0 2px, transparent 2px 4px);
  flex: none;
  display: grid;
  place-items: center;
  width: 38px;
  height: 32px;
  background-repeat: no-repeat;
}

.g.v {
  background-image: var(--dv);
  background-position: center;
  background-size: 2px 100%;
}

.g.v.h {
  background-image: var(--dv), var(--dh);
  background-position: center, right center;
  background-size: 2px 100%, 50% 2px;
}

.g.l {
  background-image: var(--dv), var(--dh);
  background-position: center top, right center;
  background-size: 2px 50%, 50% 2px;
}

.exp {
  width: 18px;
  height: 18px;
  border: 2px solid #a5a5a5;
  background: linear-gradient(#000, #000) center / 10px 2px no-repeat #fff;
}

.exp.plus {
  background: linear-gradient(#000, #000) center / 10px 2px no-repeat, linear-gradient(#000, #000) center / 2px 10px no-repeat #fff;
}

.dot {
  flex: none;
  width: 12px;
  height: 12px;
  margin: 0 16px 0 10px;
  border: 2px solid #e58f3c;
  border-radius: 6px;
  background: #ffc489;
}

/* scrollbars */
.vscroll,
.hscroll {
  display: flex;
  align-items: center;
  background: linear-gradient(90deg, #ebebee, #f6f2f7 60%);
}

.vscroll {
  flex-direction: column;
  width: 34px;
  padding: 16px 0 14px;
}

.hscroll {
  height: 34px;
  padding: 0 14px;
  gap: 14px;
  background: linear-gradient(#ebebee, #f6f2f7 60%);
}

.hscroll .track {
  flex: 1;
}

.thumb {
  display: block;
  border: 2px solid #5f6f9c;
  background: repeating-linear-gradient(#8c8f8c 0 2px, transparent 2px 4px) center / 12px 14px no-repeat, linear-gradient(90deg, #eef0fa, #d5dceb 45%, #a9bacf 50%, #c8d2e6);
  width: 30px;
}

.thumb.short {
  height: 66px;
  margin: 25px 0 auto;
}

.thumb.long {
  height: 96px;
  margin: 56px 0 auto;
}

.hscroll .thumb {
  width: 172px;
  height: 30px;
  background: repeating-linear-gradient(90deg, #8c8f8c 0 2px, transparent 2px 4px) center / 14px 12px no-repeat, linear-gradient(#eef0fa, #ccd4e4 45%, #a3b5cb 50%, #c3cde0);
}

.hscroll.wide {
  margin-top: auto;
  padding: 0 15px;
  gap: 15px;
}

.hscroll.wide .thumb {
  width: 73.5%;
}

.tri {
  flex: none;
  border: 7px solid transparent;
}

.tri.up { border-bottom: 8px solid #47587a; border-top: 0; }
.tri.dn { border-top: 8px solid #47587a; border-bottom: 0; }
.tri.lf { border-right: 8px solid #47587a; border-left: 0; }
.tri.rt { border-left: 8px solid #47587a; border-right: 0; }

.tri.black {
  border-width: 9px 0 9px 10px;
  border-left-color: #000;
}

/* project view */
.project {
  display: flex;
  flex-direction: column;
  min-width: 0;
  min-height: 0;
  background: var(--blue);
  border-left: 2px solid var(--edge);
  border-bottom: 2px solid var(--edge);
}

.projtabs {
  grid-template-columns: 184px 130px 147px 160px 122px 140px 195px;
  height: 40px;
  padding-top: 1px;
  border-bottom: 3px solid var(--edge);
}

.projbar {
  grid-template-columns: 44px 8px 124px 18px 44px 14px 50px 48px 1fr;
  height: 58px;
  margin-top: 2px;
  padding-left: 14px;
  border-top: 2px solid #a0a0a0;
  border-bottom: 4px solid #fff;
}

.projbar select {
  width: 120px;
  height: 40px;
  padding-left: 6px;
  font-size: 22px;
  appearance: none;
  background: conic-gradient(from -45deg at 50% 100%, #4a78b8 90deg, #eef2ff 0) right 8px center / 14px 8px no-repeat #eef2ff;
}

.muted {
  gap: 8px;
  color: #707070;
  font-size: 21px;
}

.projbody {
  flex: 1;
  min-height: 0;
  display: flex;
  gap: 8px;
  background: #f6f2f7;
}

.projtree {
  width: 499px;
  display: grid;
  grid-template-columns: 1fr 34px;
  grid-template-rows: 1fr 34px;
  background: #fff;
  border: 2px solid var(--dark);
}

.treeview {
  min-height: 0;
  overflow: hidden;
}

.itempane {
  flex: 1;
  background: #fff;
  border: 2px solid var(--line);
}

.items {
  border-collapse: separate;
  border-spacing: 0;
  font-size: 22px;
  line-height: 30px;
  color: #000;
}

.items th {
  height: 50px;
  padding: 0 8px;
  text-align: left;
  font-weight: normal;
  color: #4b6287;
  background: linear-gradient(#fbfcff, #e8edf7 50%, #d8dfeb);
  border-right: 2px solid var(--line);
  border-bottom: 2px solid var(--line);
}

.items td {
  height: 38px;
  width: 164px;
  padding: 0 0 2px 2px;
  border: 2px dotted #c0c0c0;
  border-top: 0;
}

.items td div {
  display: flex;
  align-items: center;
  gap: 2px;
}

.items .ic {
  height: 28px;
}

.items td.rs {
  width: 38px;
  padding-left: 14px;
  background: #d3e5f5;
  border: 0;
  border-bottom: 2px solid var(--line);
}

.items .tri {
  display: block;
  width: 0;
}

.items tr.cur td:last-child {
  background: linear-gradient(#fdd3a0, #feb560 45%, #fea63a 50%, #ffe07c);
  border-color: #3a78c0;
  border-bottom-color: #c0c0c0;
}

/* lower grid */
.lower {
  flex: 566 1 0;
  min-height: 0;
  display: flex;
  border: 2px solid var(--dark);
  border-right-width: 4px;
}

.sidetools2 {
  width: 78px;
  padding: 12px 0 0 24px;
  display: flex;
  flex-direction: column;
  background: linear-gradient(90deg, #dfecff, #cfe1ff 50%, #b0d2ff);
  border-right: 4px solid #79a8e6;
}

.sidetools2 button {
  display: flex;
  align-items: center;
  height: 32px;
  margin-bottom: 16px;
}

.sidetools2 .drop {
  gap: 11px;
  margin-left: -7px;
}

.sidetools2 .hsep {
  width: 42px;
  margin: -7px 0 12px -2px;
}

.sidetools2 .ic {
  height: 30px;
}

.gridpane {
  flex: 1;
  min-width: 0;
  display: flex;
  flex-direction: column;
  background: var(--blue);
}

.gridtabs {
  grid-template-columns: 170px 122px 239px 317px 302px 240px 162px 135px;
  height: 41px;
  border-bottom: 3px solid var(--edge);
}

.gridbody {
  flex: 1;
  min-height: 0;
  display: flex;
  flex-direction: column;
  background: #fff;
  border: 2px solid var(--line);
  border-left: 0;
}

.grouphint {
  margin: 0;
  padding: 16px 0 21px 18px;
  font-size: 24px;
  color: #1a78dc;
}

.equip {
  width: 100%;
  table-layout: fixed;
  border-collapse: separate;
  border-spacing: 0;
  font-size: 22px;
  line-height: 30px;
  color: #000;
}

.c-plus { width: 41px; }
.c-sel { width: 53px; }
.c-remove { width: 162px; }
.c-tax { width: 230px; }
.c-model { width: 216px; }
.c-desc { width: 500px; }
.c-labor { width: 214px; }
.c-qty { width: 136px; }
.c-pos { width: 300px; }
.c-gpm { width: 160px; }
.c-unit { width: 173px; }
.c-sell { width: 149px; }
.c-cost { width: 160px; }

.equip th {
  height: 50px;
  padding: 0;
  font-weight: normal;
  color: #4b6a98;
  background: linear-gradient(#fbfcff, #e8edf7 50%, #d8dfeb);
  border: 2px solid var(--line);
  border-left: 0;
}

.equip th:nth-child(2) {
  border-left: 2px solid var(--line);
}

.equip th div {
  display: flex;
  align-items: center;
  padding: 0 6px 2px 4px;
}

.equip th span {
  flex: 1;
  display: grid;
  justify-content: center;
}

.pin {
  flex: none;
  width: 20px;
  height: 16px;
  color: #2d4a7c;
}

.equip tbody td {
  height: 42px;
  padding: 0 12px 4px;
  background: linear-gradient(#c4bfc8, #d0b1d0 45%, #dfa2df);
  border-right: 2px solid var(--line);
  border-bottom: 2px solid var(--line);
}

.equip tbody td.plus {
  padding: 0;
  text-align: center;
  background: none;
  border: 0;
}

.equip tbody td.rs {
  padding: 0 8px 2px 6px;
  background: #d3e5f5;
  border-left: 2px solid var(--line);
}

.rs div {
  display: flex;
  align-items: center;
  justify-content: flex-end;
  gap: 4px;
}

.rs .pin {
  color: #000;
}

.equip tbody td.c {
  padding-bottom: 0;
}

.equip td.c:nth-child(3) {
  padding-right: 16px;
}

.equip tbody td.r {
  text-align: right;
  padding-right: 6px;
}

.equip tbody .cur td:nth-child(n+3) {
  background: linear-gradient(#fdd3a0, #feb560 40%, #fea937 45%, #ffe07c);
  border-top: 2px dotted #000;
  border-bottom: 2px dotted #000;
}

.equip .cur td:nth-child(3) {
  border-left: 2px dotted #000;
}

.equip input {
  appearance: none;
  display: block;
  width: 26px;
  height: 26px;
  margin: 0 auto;
  border: 2px solid #a9c1e0;
  background: linear-gradient(135deg, #c8ccd4, #f7f8fb) center / 16px 16px no-repeat #f4f4f6;
}

.equip input:checked::after {
  content: "";
  display: block;
  width: 7px;
  height: 14px;
  margin: 1px 0 0 8px;
  border: solid #41689c;
  border-width: 0 3px 3px 0;
  transform: rotate(35deg);
}

/* status bar */
.status {
  display: flex;
  align-items: center;
  gap: 8px;
  height: 47px;
  padding: 5px 6px 2px 2px;
  color: #000;
  font-size: 23px;
}

.workspace {
  padding: 3px 6px;
  background: #dfbfdf;
  border-right: 2px solid #a0a0a0;
}

.ok {
  margin-left: auto;
  padding: 3px 6px;
  background: #7cfc00;
}

.sizer {
  width: 24px;
  height: 24px;
  align-self: flex-end;
  margin-left: -4px;
}
```
